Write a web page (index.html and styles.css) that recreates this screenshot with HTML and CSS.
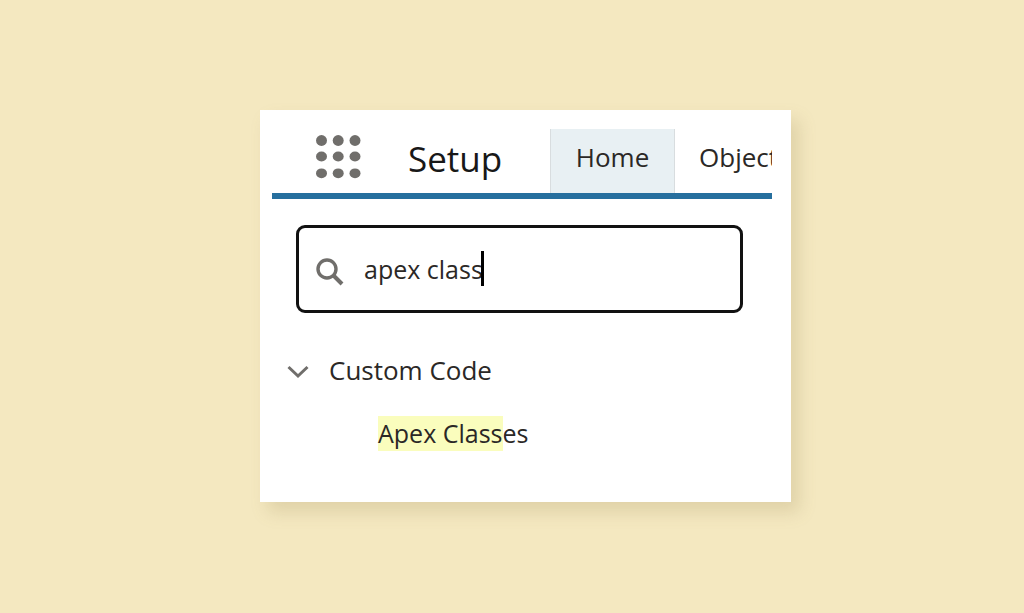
FILE: index.html
```html
<!DOCTYPE html>
<html lang="en">
<head>
<meta charset="utf-8">
<meta name="viewport" content="width=device-width, initial-scale=1">
<title>Setup</title>
<link rel="stylesheet" href="styles.css">
</head>
<body>
<main class="card">
  <header class="topbar">
    <button class="launcher" type="button" aria-label="App Launcher">
      <svg width="46" height="44" viewBox="0 0 46 44" fill="#706e6b" aria-hidden="true">
        <ellipse cx="5.500" cy="5.500" rx="5.500" ry="5.400"/><ellipse cx="22.200" cy="5.500" rx="5.500" ry="5.400"/><ellipse cx="39" cy="5.500" rx="5.500" ry="5.400"/>
        <ellipse cx="5.500" cy="21.500" rx="5.500" ry="4.900"/><ellipse cx="22.200" cy="21.500" rx="5.500" ry="4.900"/><ellipse cx="39" cy="21.500" rx="5.500" ry="4.900"/>
        <ellipse cx="5.500" cy="38.300" rx="5.500" ry="4.900"/><ellipse cx="22.200" cy="38.300" rx="5.500" ry="4.900"/><ellipse cx="39" cy="38.300" rx="5.500" ry="4.900"/>
      </svg>
    </button>
    <h1 class="title">Setup</h1>
    <nav class="tabs">
      <a class="tab tab-active" href="#home">Home</a>
      <a class="tab" href="#objects">Object</a>
    </nav>
  </header>
  <div class="search">
    <svg class="search-icon" width="28" height="28" viewBox="0 0 28 28" fill="none" stroke="#706e6b" stroke-width="3.400" aria-hidden="true">
      <circle cx="11" cy="11" r="9"/><path d="M17.500 17.500L26 26" stroke-width="4"/>
    </svg>
    <input class="search-input" type="text" value="apex class" aria-label="Quick Find">
    <span class="caret"></span>
  </div>
  <section class="tree">
    <button class="branch" type="button" aria-expanded="true">
      <svg width="22" height="14" viewBox="0 0 22 14" fill="none" stroke="#706e6b" stroke-width="3" aria-hidden="true"><path d="M1.500 2L11 11L20.500 2"/></svg>
      Custom Code
    </button>
    <a class="leaf" href="#apex-classes"><mark class="match">Apex Class</mark>es</a>
  </section>
</main>
</body>
</html>
```
FILE: styles.css
```css
* {
  box-sizing: border-box;
}

body {
  margin: 0;
  min-height: 100vh;
  padding: 24px 0 26px 27px;
  display: flex;
  align-items: center;
  justify-content: center;
  background: #f4e8c0;
  color: #2b2826;
  font-family: "Open Sans", "Noto Sans", sans-serif;
  font-size: 26px;
  line-height: 36px;
}

.card {
  width: 100%;
  max-width: 531px;
  padding: 19px 19px 51px 12px;
  background: #fff;
  box-shadow: 8px 10px 16px rgba(150, 130, 80, 0.22);
}

.topbar {
  display: flex;
  align-items: stretch;
  border-bottom: 6px solid #266f9e;
  overflow: hidden;
}

button {
  padding: 0;
  border: 0;
  background: none;
  color: inherit;
  font: inherit;
}

.launcher {
  display: flex;
  align-items: center;
  padding: 0 46px 8px 44px;
}

.title {
  flex: 1 0 auto;
  margin: 0;
  padding: 6px 0 10px;
  color: #181818;
  font-size: 35px;
  font-weight: 400;
  line-height: 48px;
}

.tabs {
  display: flex;
  flex: 0 0 222px;
  min-width: 0;
}

.tab {
  padding: 10px 24px 0;
  color: inherit;
  text-decoration: none;
}

.tab-active {
  flex: 0 0 125px;
  padding: 10px 0 0;
  border: solid #d8dddf;
  border-width: 0 1px;
  background: #e8f0f3;
  text-align: center;
}

.search {
  position: relative;
  display: flex;
  align-items: center;
  gap: 20px;
  height: 88px;
  margin: 26px 29px 0 24px;
  padding: 0 17px;
  border: 3px solid #111;
  border-radius: 9px;
}

.search-icon {
  flex: none;
  margin-top: 6px;
}

.search-input {
  flex: 1;
  min-width: 0;
  height: 36px;
  padding: 0;
  border: 0;
  outline: 0;
  background: none;
  color: inherit;
  font: inherit;
  font-size: 25px;
}

.caret {
  position: absolute;
  top: 23px;
  left: 182px;
  width: 3px;
  height: 35px;
  background: #000;
}

.tree {
  display: flex;
  flex-direction: column;
  align-items: flex-start;
  gap: 28px;
  padding: 39px 0 0 15px;
}

.branch {
  display: flex;
  align-items: center;
  gap: 20px;
}

.branch svg {
  margin-top: 4px;
}

.leaf {
  margin-left: 91px;
  color: inherit;
  font-size: 25px;
  line-height: 35px;
  text-decoration: none;
}

.match {
  display: inline-block;
  background: #fafdbd;
  color: inherit;
}
```
